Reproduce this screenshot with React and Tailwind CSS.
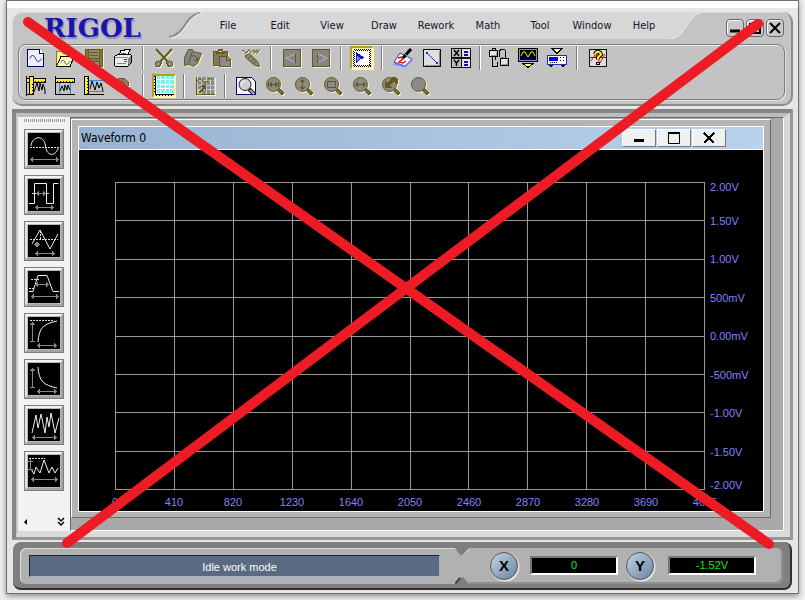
import { useState } from 'react'

const menuItems = ['File', 'Edit', 'View', 'Draw', 'Rework', 'Math', 'Tool', 'Window', 'Help']
const voltLabels = ['2.00V', '1.50V', '1.00V', '500mV', '0.00mV', '-500mV', '-1.00V', '-1.50V', '-2.00V']
const pointLabels = ['0', '410', '820', '1230', '1640', '2050', '2460', '2870', '3280', '3690', '4095']

const OLIVE = '#665a14'

function Icon({ children, disabled = false }) {
  return (
    <svg
      viewBox="0 0 20 20"
      fill="none"
      shapeRendering="crispEdges"
      className={`w-5 h-5 ${disabled ? 'drop-shadow-[1px_1px_0_#f4f0d8]' : ''}`}
    >
      {children}
    </svg>
  )
}

// Magnifier shared by all the zoom tools, the mark goes inside the lens
function Lens({ children }) {
  return (
    <Icon disabled>
      <path d="M13.500 13.500l5 5" stroke={OLIVE} strokeWidth="3" />
      <path d="M14.500 14.500l3 3" stroke="#8b8b8b" />
      <circle cx="8.500" cy="8.500" r="7" fill="#8a8a8a" stroke={OLIVE} shapeRendering="auto" />
      {children}
    </Icon>
  )
}

const icons = {
  newFile: (
    <Icon>
      <path d="M1.500 1.500h12l4 4v13h-16z" fill="#eef0ff" stroke="#000070" />
      <path d="M13.500 1.500v4h4" fill="#fff" stroke="#000070" />
      <path d="M4 10.500c1-4 4-4 5.500 0s4 4 6 0" stroke="#2020d0" shapeRendering="auto" />
    </Icon>
  ),
  open: (
    <Icon>
      <path d="M1.500 17V3.500h5l2 2h7V8" fill="#fbf08c" stroke="#8a7a10" />
      <path d="M1.500 18.500L6 8.500h13l-4 10z" fill="#fffbb0" stroke="#000" />
      <path d="M6 14.500c1-3 3-3 4 0s3 2 5-1" stroke="#2040e0" shapeRendering="auto" />
    </Icon>
  ),
  save: (
    <Icon disabled>
      <path d="M1.500 1.500h17v17h-15l-2-2z" fill="#807848" stroke={OLIVE} />
      <path d="M4.500 1.500h11v9h-11z" fill="#918b68" stroke={OLIVE} />
      <path d="M6 4.500h8M6 7.500h8" stroke={OLIVE} />
      <path d="M5.500 13.500h10v5h-10z" fill="#8b8b8b" stroke={OLIVE} />
      <path d="M7 14h3v4H7z" fill={OLIVE} />
    </Icon>
  ),
  print: (
    <Icon>
      <path d="M5.500 8L8 2.500h3l1-1h5L14.500 8" fill="#fff" stroke="#000" />
      <path d="M1.500 8.500l3-2h13l1 1v7l-4 4h-12l-1-1z" fill="#ececec" stroke="#000" />
      <path d="M15 10v8l3-4V8z" fill="#8a8a8a" />
      <path d="M2 9.500h13M4 15.500h9" stroke="#888" />
      <path d="M11 11.500h3" stroke="#e00000" />
      <path d="M11 13.500h3" stroke="#00a040" />
      <path d="M8 5.500h5" stroke="#555" />
    </Icon>
  ),
  cut: (
    <Icon disabled>
      <path d="M2 1l12 13M18 1L6 14" stroke={OLIVE} strokeWidth="2" shapeRendering="auto" />
      <path d="M1.500 14.500l3-2 3 2-2 4h-3l-1-1zM18.500 14.500l-3-2-3 2 2 4h3l1-1z" fill="#8b8b8b" stroke={OLIVE} />
    </Icon>
  ),
  copy: (
    <Icon disabled>
      <path d="M5.500 1.500h4l1 2 8 2-4 10-4 3-4-2-5 1v-8z" fill="#858585" stroke={OLIVE} shapeRendering="auto" />
      <path d="M9.500 3.500l-4 12" stroke={OLIVE} shapeRendering="auto" />
      <path d="M9 8c3-1 5 1 5 4M11 12.500h3.500V9" stroke={OLIVE} shapeRendering="auto" />
    </Icon>
  ),
  paste: (
    <Icon disabled>
      <path d="M1.500 3.500h14v14h-14z" fill="#807b60" stroke={OLIVE} />
      <path d="M6 1h5v2h2v3H4V3h2z" fill={OLIVE} />
      <path d="M7 3.500h3" stroke="#ddd" />
      <path d="M7.500 8.500h8l3 3v7h-11z" fill="#8b8b8b" stroke={OLIVE} />
      <path d="M14.500 8.500v4h4" stroke={OLIVE} />
    </Icon>
  ),
  brush: (
    <Icon disabled>
      <path d="M1 2.500h2l2 3 3-4 2 3 3-3v4l3-4v4l3-4" stroke={OLIVE} shapeRendering="auto" />
      <path d="M4.500 7.500l4-2 9 9 1 4-5-1-9-8z" fill="#858585" stroke={OLIVE} shapeRendering="auto" />
      <path d="M7 11l4-4M10 14l4-4M12 16l4-4" stroke={OLIVE} shapeRendering="auto" />
    </Icon>
  ),
  prev: (
    <Icon disabled>
      <rect x="1.500" y="1.500" width="17" height="17" rx="1" fill="#858585" stroke={OLIVE} />
      <path d="M13.500 5v10" stroke={OLIVE} />
      <path d="M13 6l-9 4 9 4.500" stroke="#f0f0f0" strokeDasharray="1 1" shapeRendering="auto" />
    </Icon>
  ),
  next: (
    <Icon disabled>
      <rect x="1.500" y="1.500" width="17" height="17" rx="1" fill="#858585" stroke={OLIVE} />
      <path d="M6.500 5v10" stroke={OLIVE} />
      <path d="M7 6l9 4-9 4.500" stroke="#f0f0f0" strokeDasharray="1 1" shapeRendering="auto" />
    </Icon>
  ),
  select: (
    <Icon>
      <path d="M1 1h18v18H1z" fill="#fff" />
      <path d="M1.500 1.500h17v17h-17z" stroke="#000" strokeDasharray="1 1" />
      <path d="M2.500 2.500h15v15h-15z" stroke="#000" strokeDasharray="1 1" />
      <path d="M4 4l9 6-5 1-4 4z" fill="#1414c8" />
      <path d="M5 8l3 2-3 3z" fill="#8090ff" />
    </Icon>
  ),
  pen: (
    <Icon>
      <path d="M1 14L7 5l12 6-7 7z" fill="#fff" stroke="#3030b0" shapeRendering="auto" />
      <path d="M1 15.500l11 3 7-7" stroke="#7080ff" strokeWidth="2" shapeRendering="auto" />
      <path d="M5 10l3-1 2 2-4 3 4 1 3-2" stroke="#e01010" shapeRendering="auto" strokeWidth="1.500" />
      <path d="M10 10l8-9" stroke="#000" strokeWidth="3" shapeRendering="auto" />
      <path d="M12 6l3 3" stroke="#aaa" />
    </Icon>
  ),
  line: (
    <Icon>
      <path d="M1.500 1.500h17v17h-17z" fill="#e0e0e0" stroke="#111" />
      <path d="M17.500 3v14.500H3" stroke="#888" />
      <path d="M5 5l10 10" stroke="#1030f0" />
      <path d="M4 4h2v2H4zM14 14h2v2h-2z" fill="#1030f0" />
    </Icon>
  ),
  xy: (
    <Icon>
      <path d="M0 0h20v20H0z" fill="#111" />
      <path d="M1 1h9v8H1zM1 11h9v8H1z" fill="#bbb" />
      <path d="M11 1h8v8h-8zM11 11h8v8h-8z" fill="#e4e4e4" />
      <path d="M3 2l5 6M8 2L3 8M3 12l2.500 3L8 12M5.500 15v3" stroke="#000" strokeWidth="1.500" shapeRendering="auto" />
      <path d="M13 3h4v2h-4zM13 6h4v2h-4zM13 13h4v2h-4zM13 16h4v2h-4z" fill="#1010b0" />
    </Icon>
  ),
  connect: (
    <Icon>
      <path d="M3.500 8v10.500h5v-5M6.500 8v4M10.500 9V2.500l2-1h3l1 1V11M13.500 11v-2" stroke="#000" />
      <path d="M3.500 2V.5h3V2" stroke="#000" />
      <path d="M0.500 2.500h8v6h-8zM11.500 10.500h8v7h-8z" fill="#e4e4e4" stroke="#000" />
      <path d="M2 7.500h5.500V4M13 16.500h5.500V12" stroke="#999" />
    </Icon>
  ),
  scopeDown: (
    <Icon>
      <path d="M0.500 0.500h19v13H0.500z" fill="#8888e8" stroke="#000" />
      <path d="M2 2h16v10H2z" fill="#000" />
      <path d="M3 8l2-4h2l3 5 3-5h2l2 4" stroke="#f8f020" shapeRendering="auto" />
      <path d="M5 15.500h10l-5 4z" fill="#ffff70" stroke="#000" />
    </Icon>
  ),
  scopeUp: (
    <Icon>
      <path d="M5 .5h10l-5 5z" fill="#ffff70" stroke="#000" />
      <path d="M0.500 7.500h19v9H0.500z" fill="#fff" stroke="#2030b0" />
      <path d="M2 9h9v4H2z" fill="#0000e0" />
      <path d="M13 9h1v1h-1zM16 9h1v1h-1zM13 12h1v1h-1zM16 12h1v1h-1z" fill="#000" />
      <path d="M3 14.500h8" stroke="#000" strokeDasharray="1 1" />
      <path d="M2 17.500h4M14 17.500h4M3 18.500h2M15 18.500h2" stroke="#000" />
    </Icon>
  ),
  help: (
    <Icon>
      <path d="M1.500 1.500h17v17h-17z" fill="#ddd" stroke="#111" />
      <path d="M2 9.500h16" stroke="#333" />
      <path d="M3 13l4-6 5 8 5-9" stroke="#f01010" shapeRendering="auto" />
      <path d="M7 6.500l1-2 2-1 2 1 1 2-3 3v2" stroke="#000" strokeWidth="4" shapeRendering="auto" />
      <path d="M7 6.500l1-2 2-1 2 1 1 2-3 3v2" stroke="#ffef20" strokeWidth="2" shapeRendering="auto" />
      <path d="M8.500 14.500h3v2h-3z" fill="#ffef20" stroke="#000" />
    </Icon>
  ),
  rulerBoth: (
    <Icon>
      <path d="M0.500 0v20M0 18.500h6" stroke="#000" />
      <path d="M0.500 2.500h19v4H0.500z" fill="#ffee30" stroke="#000" />
      <path d="M3.500 0.500h4v18h-4z" fill="#ffee30" stroke="#000" />
      <path d="M9 5.500h10M6.500 8v10" stroke="#000" strokeDasharray="1 2" />
      <path d="M8 16l3-9 2 8 1-8 2 7 1-6 2 6v4" stroke="#000" shapeRendering="auto" />
    </Icon>
  ),
  rulerTop: (
    <Icon>
      <path d="M0.500 0v18.500H20" stroke="#000" />
      <path d="M0.500 2.500h19v4H0.500z" fill="#ffee30" stroke="#000" />
      <path d="M2 5.500h17" stroke="#000" strokeDasharray="1 2" />
      <path d="M4.500 7v11M15.500 7v11" stroke="#2090f0" />
      <path d="M5 15l2-5 2 5 1-6 2 5 1-5 2 5" stroke="#000" shapeRendering="auto" />
    </Icon>
  ),
  rulerLeft: (
    <Icon>
      <path d="M0 18.500h20" stroke="#000" />
      <path d="M0.500 0.500h4v18h-4z" fill="#ffee30" stroke="#000" />
      <path d="M3.500 2v16" stroke="#000" strokeDasharray="1 2" />
      <path d="M5 4.500h15M5 15.500h15" stroke="#2090f0" />
      <path d="M6 13l2-8 3 9 2-8 2 6 2-5 2 8" stroke="#000" shapeRendering="auto" />
    </Icon>
  ),
  hand: (
    <Icon disabled>
      <path d="M4 4l3-2 5 1 3 3v4l-3 3-4 4-4-4z" fill="#858270" stroke={OLIVE} />
      <path d="M6 7l4 3M8 4l4 4" stroke={OLIVE} />
    </Icon>
  ),
  grid: (
    <Icon>
      <path d="M1 0h19v18H1z" fill="#fff" />
      <path d="M3 0h3v3H3zM7 0h4v3H7zM12 0h3v3h-3zM16 0h4v3h-4zM3 4h3v4H3zM7 4h4v4H7zM12 4h3v4h-3zM16 4h4v4h-4zM3 9h3v3H3zM7 9h4v3H7zM12 9h3v3h-3zM16 9h4v3h-4zM3 13h3v4H3zM7 13h4v4H7zM12 13h3v4h-3zM16 13h4v4h-4z" fill="#6cf6f6" />
      <path d="M1.500 0v18.500H20" stroke="#000" />
      <path d="M0.500 0v18M2 19.500h18" stroke="#000" strokeDasharray="1 2" />
    </Icon>
  ),
  gridCursor: (
    <Icon disabled>
      <path d="M2 1h18v17H2z" fill="#c8c8c8" />
      <path d="M3 1h3v3H3zM7 1h4v3H7zM12 1h3v3h-3zM16 1h3v3h-3zM3 5h3v4H3zM7 5h4v4H7zM12 5h3v4h-3zM16 5h3v4h-3zM3 10h3v3H3zM7 10h4v3H7zM12 10h3v3h-3zM16 10h3v3h-3zM12 14h3v4h-3zM16 14h3v4h-3zM7 14h4v4H7z" fill="#8b8b8b" />
      <path d="M1.500 1v17.500H20" stroke={OLIVE} />
      <path d="M2 5l3-2 3 2 3 2 4-5 3 3" stroke={OLIVE} shapeRendering="auto" />
      <path d="M3 16l5-5H4l7-3v7l-2-2-4 4z" fill={OLIVE} />
    </Icon>
  ),
  preview: (
    <Icon>
      <path d="M0.500 1.500h15l4 4v13h-19z" fill="#fff" stroke="#000078" />
      <path d="M13 13l5 5" stroke="#222" strokeWidth="4" shapeRendering="auto" />
      <path d="M14 14l4 4" stroke="#aaa" strokeWidth="2" shapeRendering="auto" />
      <circle cx="9" cy="8.500" r="6" fill="#cfcfcf" stroke="#222" shapeRendering="auto" />
      <path d="M5.500 9c0-3 1-4 4-4" stroke="#fff" shapeRendering="auto" />
    </Icon>
  ),
  zoomIn: (
    <Lens>
      <path d="M4 8.500h9M3.500 6v5M13.500 6v5" stroke={OLIVE} />
      <path d="M4 8.500L7 6v5zM13 8.500L10 6v5z" fill={OLIVE} />
    </Lens>
  ),
  zoomY: (
    <Lens>
      <path d="M8.500 4v9" stroke={OLIVE} />
      <path d="M8.500 3L11 6H6zM8.500 14l2.500-3H6z" fill={OLIVE} />
    </Lens>
  ),
  zoomRect: <Lens><path d="M4.500 5.500h8v6h-8z" stroke={OLIVE} /></Lens>,
  zoomX: (
    <Lens>
      <path d="M4 8.500h9" stroke={OLIVE} />
      <path d="M3 8.500L6 6v5zM14 8.500L11 6v5z" fill={OLIVE} />
    </Lens>
  ),
  zoomBack: (
    <Lens>
      <path d="M4 5v7h7L9 10l4-5 2 3h2V3l-3-2h-3L7 7z" fill={OLIVE} />
    </Lens>
  ),
  zoom: <Lens />,
}

const topTools = [
  ['New', 'newFile'], ['Open', 'open'], ['Save', 'save'], ['Print', 'print'], '|',
  ['Cut', 'cut'], ['Copy', 'copy'], ['Paste', 'paste'], ['Smooth', 'brush'], '|',
  ['Previous', 'prev'], ['Next', 'next'], '|',
  ['Select', 'select'], '|',
  ['Freehand', 'pen'], ['Line', 'line'], ['Expression', 'xy'], '.',
  ['Connect', 'connect'], ['Read', 'scopeDown'], ['Send', 'scopeUp'], '|',
  ['Help', 'help'],
]

const bottomTools = [
  ['Cursors', 'rulerBoth'], ['X cursor', 'rulerTop'], ['Y cursor', 'rulerLeft'], ['Pan', 'hand'], '|',
  ['Grid', 'grid'], '|',
  ['Snap', 'gridCursor'], '|',
  ['Preview', 'preview'], ['Zoom X', 'zoomIn'], ['Zoom Y', 'zoomY'], ['Zoom area', 'zoomRect'],
  ['Fit X', 'zoomX'], ['Undo zoom', 'zoomBack'], ['Zoom all', 'zoom'],
]

function ToolRow({ tools, active, onPick }) {
  return (
    <div className="flex h-[26px] items-center">
      {tools.map((tool, i) => {
        if (typeof tool === 'string') {
          return (
            <div key={i} className={`flex h-6 justify-center ${tool === '|' ? 'w-3' : 'w-[9px]'}`}>
              <div className="w-0.5 border-l border-r border-l-[#7d7d7d] border-r-white" />
            </div>
          )
        }
        const [label, icon] = tool
        return (
          <div key={label} className="flex w-[29px] justify-center">
            <button
              aria-label={label}
              onClick={() => onPick(label)}
              className={`flex h-6 w-6 items-center justify-center ${
                active === label ? 'border-2 border-t-[#b89c28] border-l-[#b89c28] border-r-[#fff6b0] border-b-[#fff6b0] bg-[#ffec90]' : ''
              }`}
            >
              <span className="flex h-5 w-5 shrink-0">{icons[icon]}</span>
            </button>
          </div>
        )
      })}
    </div>
  )
}

const arrowX = (x1, x2, y) => `M${x1} ${y}.5h${x2 - x1}M${x1 + 2}.5 ${y - 2}v5M${x1 + 1}.5 ${y - 1}v3M${x2 - 3}.5 ${y - 2}v5M${x2 - 2}.5 ${y - 1}v3`

const measures = [
  { label: 'Sine', wave: 'M3 13c1-10 13-12 14.500 0s11 10 13 1', dots: 'M2 14.500h29', arrow: arrowX(2, 31, 26) },
  { label: 'Square', wave: 'M1 24.500h5.500v-20h12v20h7v-20h5', dots: 'M4 14.500h18', arrow: arrowX(7, 26, 28) + arrowX(8, 18, 14) },
  { label: 'Triangle', wave: 'M4 19l8-14 10 19 8-15', dots: 'M2 14.500h28M12.500 6v9', arrow: arrowX(7, 27, 28) + arrowX(6, 12, 19) },
  { label: 'Trapezoid', wave: 'M1 20.500h4l5-16h9l6 16h6', dots: 'M3 8.500h8M1 17.500h6', arrow: arrowX(3, 31, 25) + arrowX(7, 21, 13) },
  { label: 'Rise', wave: 'M10 25c1-14 5-18 19-21', dots: 'M2 3.500h24', arrow: arrowX(9, 29, 28) + 'M4.500 5v20M2 24.500h5M2 7.500h5M3 6.500h3' },
  { label: 'Fall', wave: 'M10 4c1 14 5 18 19 21', dots: '', arrow: arrowX(9, 29, 28) + 'M4.500 5v20M2 24.500h5M2 7.500h5M3 6.500h3' },
  { label: 'Noise', wave: 'M4 24l4-18 2 13 3-14 4 19 2-16 2 10 2-14 4 20 4-15', dots: '', arrow: arrowX(4, 29, 28) },
  { label: 'Sinc', wave: 'M3 14l3 5 2-7 4 6 4-13 5 13 3-6 3 6 3-5', dots: 'M1 3.500h16', arrow: arrowX(3, 30, 24) + 'M2.500 4v11M0 6.500h5M0 14.500h5' },
]

function MeasureButton({ wave, dots, arrow, label }) {
  return (
    <button aria-label={label} className="h-10 w-10 shrink-0 border border-[#7c7c7c] bg-[#b9b9b9]">
      <span className="flex h-full w-full items-center justify-center border-2 border-t-[#f2f2f2] border-l-[#e4e4e4] border-r-[#a4a4a4] border-b-[#a4a4a4]">
        <svg viewBox="0 0 32 32" fill="none" className="h-8 w-8 bg-black">
          <path d={wave} stroke="#eee" />
          <path d={dots} stroke="#ddd" strokeDasharray="2 1" shapeRendering="crispEdges" />
          <path d={arrow} stroke="#888" shapeRendering="crispEdges" />
        </svg>
      </span>
    </button>
  )
}

function FrameButton({ label, children }) {
  return (
    <button
      aria-label={label}
      className="flex h-[18px] w-[18px] items-center justify-center rounded-sm border border-[#666] bg-[#c8c8c8] shadow-[inset_1px_1px_0_#fff]"
    >
      <svg viewBox="0 0 14 14" fill="none" stroke="#000" strokeWidth="2" className="h-3.5 w-3.5">
        {children}
      </svg>
    </button>
  )
}

function ChildButton({ label, children }) {
  return (
    <button
      aria-label={label}
      className="flex h-[18px] w-[34px] items-center justify-center border border-t-white border-l-white border-r-[#777] border-b-[#777] bg-[#f0f0f0]"
    >
      <svg viewBox="0 0 12 12" fill="none" stroke="#000" className="h-3 w-3" shapeRendering="crispEdges">
        {children}
      </svg>
    </button>
  )
}

function Header() {
  const [active, setActive] = useState('Select')
  const [view, setView] = useState('Grid')

  return (
    <header className="mx-[5px] mt-1 rounded-[10px] border-r-2 border-b-2 border-[#8a8a8a] bg-[#c4c4c4] px-1.5 pb-1 shadow-[inset_1px_1px_0_#d8d8d8]">
      <div className="flex h-8 items-start">
        <div className="w-[148px] shrink-0 pl-[26px] pt-1 font-['DejaVu_Serif',serif] text-[26px] leading-6 font-bold text-[#1c14aa] [text-shadow:1px_2px_1px_#8c8cc0]">
          RIGOL
        </div>
        <svg viewBox="0 0 36 27" fill="none" className="h-[27px] w-9 shrink-0">
          <path d="M0 26C18 24 18 2 36 0V27H0z" fill="#d7d7d7" />
          <path d="M3 25C19 23 19 3 34 1" stroke="#8a8a8a" strokeWidth="2" />
          <path d="M5 26C21 24 20 4 36 1" stroke="#f0f0f0" />
        </svg>
        <nav className="flex h-[27px] flex-1 items-center bg-[#d7d7d7]">
          {menuItems.map((item) => (
            <button key={item} className="w-[52px] shrink-0 text-center text-[11px] leading-4 text-[#20142c]">
              {item}
            </button>
          ))}
        </nav>
        <svg viewBox="0 0 32 27" fill="none" className="h-[27px] w-8 shrink-0">
          <path d="M0 0H32C17 3 16 26 0 27z" fill="#d7d7d7" />
          <path d="M0 27C16 26 17 3 32 0" stroke="#eee" />
        </svg>
        <div className="flex shrink-0 gap-0.5 pt-[7px] pr-px pl-6">
          <FrameButton label="Minimize"><path d="M2 10h10" strokeWidth="3" /></FrameButton>
          <FrameButton label="Maximize"><path d="M2 3h10v9H2z" /></FrameButton>
          <FrameButton label="Close"><path d="M2 2l10 10M12 2L2 12" /></FrameButton>
        </div>
      </div>
      <div className="flex flex-col gap-0.5 rounded-lg border border-[#7c7c7c] bg-[#c3c3c3] px-0.5 shadow-[inset_1px_1px_0_#ececec,1px_1px_0_#e4e4e4]">
        <ToolRow tools={topTools} active={active} onPick={setActive} />
        <ToolRow tools={bottomTools} active={view} onPick={setView} />
      </div>
    </header>
  )
}

function Plot() {
  return (
    <div className="flex flex-1 bg-black pt-8 pl-9 text-[11px] text-[#8080ff]">
      <div className="flex flex-1 flex-col">
        <div className="grid flex-1 grid-cols-10 grid-rows-8 border-t border-l border-[#9a9a9a]">
          {Array.from({ length: 80 }, (_, i) => (
            <div key={i} className="border-r border-b border-[#9a9a9a]" />
          ))}
        </div>
        <div className="flex h-[21px] items-center justify-between pt-1">
          {pointLabels.map((label) => (
            <div key={label} className="flex w-0 justify-center">{label}</div>
          ))}
        </div>
      </div>
      <div className="flex w-[58px] flex-col justify-between pb-[21px] pl-[5px] leading-[10px]">
        {voltLabels.map((label, i) => (
          <div
            key={label}
            className={`flex h-0 ${i === 0 ? 'items-start' : i === voltLabels.length - 1 ? 'items-end' : 'items-center'}`}
          >
            {label}
          </div>
        ))}
      </div>
    </div>
  )
}

function WaveformWindow() {
  return (
    <section className="mr-3 mb-3 flex flex-1 flex-col border border-t-white border-l-white border-r-[#6c6c6c] border-b-[#6c6c6c] bg-[#b4b4b4] px-1.5 pt-1.5 pb-[5px]">
      <div className="flex flex-1 flex-col border border-white">
        <div className="flex h-[23px] items-center border-b border-white bg-linear-to-r from-[#99b4d1] to-[#b9d1ea] pr-[37px] pl-0.5">
          <h1 className="flex-1 font-['DejaVu_Sans_Condensed',Tahoma,sans-serif] text-[12px] text-black">Waveform 0</h1>
          <div className="flex gap-px">
            <ChildButton label="Minimize window"><path d="M1 8h10" strokeWidth="3" /></ChildButton>
            <ChildButton label="Restore window"><path d="M0.500 0.500h11v11H0.500zM1 1.500h10" /></ChildButton>
            <ChildButton label="Close window"><path d="M1 1l10 10M11 1L1 11" strokeWidth="2" /></ChildButton>
          </div>
        </div>
        <Plot />
      </div>
    </section>
  )
}

function Workspace() {
  return (
    <main className="mx-[5px] mt-[3px] flex flex-1 border-t-4 border-r-[3px] border-b-[3px] border-l-4 border-t-[#858585] border-r-[#999] border-b-[#969696] border-l-[#858585]">
      <div className="flex flex-1 border-t-4 border-r-[6px] border-b-[6px] border-l-2 border-t-[#bcbcbc] border-r-[#d8d8d8] border-b-[#dadada] border-l-[#c4c4c4]">
        <aside className="flex w-[52px] shrink-0 flex-col items-center bg-[#f2f2f2] pt-0.5">
          <div className="h-[3px] w-[41px] bg-[repeating-linear-gradient(90deg,#999_0_1px,#f2f2f2_1px_2px)]" />
          <div className="flex flex-col gap-1.5 pt-[7px]">
            {measures.map((m) => (
              <MeasureButton key={m.label} {...m} />
            ))}
          </div>
          <div className="mt-auto flex w-full items-center justify-between px-1 pb-1">
            <button aria-label="Scroll left">
              <svg viewBox="0 0 8 10" className="h-2.5 w-2"><path d="M5 2v6L2 5z" /></svg>
            </button>
            <button aria-label="More tools">
              <svg viewBox="0 0 10 10" fill="none" stroke="#000" strokeWidth="1.500" className="h-2.5 w-2.5">
                <path d="M2 1l3 3 3-3M2 5l3 3 3-3" />
              </svg>
            </button>
          </div>
        </aside>
        <div className="flex flex-1 border border-t-[#686868] border-l-[#686868] border-r-white border-b-white bg-[#a9a9a9] pt-px">
          <WaveformWindow />
        </div>
      </div>
    </main>
  )
}

function Knob({ children }) {
  return (
    <button className="h-7 w-7 rounded-full border border-[#555] bg-linear-to-br from-[#c4d4e6] to-[#6d83a0] text-center text-[15px] leading-6 font-bold text-black shadow-[1px_1px_2px_#fff]">
      {children}
    </button>
  )
}

function Readout({ children }) {
  return (
    <output className="h-[19px] w-[88px] border-2 border-t-[#777] border-l-[#777] border-r-white border-b-white bg-black text-center text-[11px] leading-[14px] text-[#10e818]">
      {children}
    </output>
  )
}

function StatusBar() {
  return (
    <footer className="mx-1.5 mt-0.5 mb-[3px] flex h-12 rounded-lg border-r-2 border-b-2 border-[#303030] bg-[#7f7f7f] px-[7px] pt-1.5 pb-1">
      <div className="flex flex-1 items-center rounded-l-md bg-[#b1b1b1] pr-[15px] pl-[9px] shadow-[inset_1px_1px_0_#dcdcdc]">
        <div className="h-[22px] flex-1 border border-t-[#1c2430] border-l-[#1c2430] border-r-[#a0b0c8] border-b-[#a0b0c8] bg-[#5a6a82] pl-2.5 text-center text-[11px] leading-[22px] text-white">
          Idle work mode
        </div>
      </div>
      <svg viewBox="0 0 14 36" preserveAspectRatio="none" className="h-full w-3.5">
        <path d="M0 0h14v36H0z" fill="#b1b1b1" />
        <path d="M0 0h14L8 7H5zM0 36h14L8 29l-3 1z" fill="#7f7f7f" />
        <path d="M8 7l6-6" stroke="#e0e0e0" fill="none" />
        <path d="M0 36l5-6" stroke="#444" strokeWidth="2" fill="none" />
      </svg>
      <div className="flex shrink-0 items-center rounded-r-md bg-[#b1b1b1] pr-[27px] pl-[21px] shadow-[inset_-2px_-2px_0_#8f8f8f]">
        <Knob>X</Knob>
        <div className="flex pl-3 pr-2 pb-0.5"><Readout>0</Readout></div>
        <Knob>Y</Knob>
        <div className="flex pl-3.5 pb-0.5"><Readout>-1.52V</Readout></div>
      </div>
    </footer>
  )
}

export default function App() {
  return (
    <div className="relative flex min-h-screen flex-col bg-[#f0f0f0] px-1.5 pb-1.5 font-['Liberation_Sans',Arial,sans-serif]">
      <div className="flex flex-1 flex-col border border-[#707070] bg-[#e6e6e6] font-['DejaVu_Sans_Condensed',Tahoma,sans-serif] shadow-[0_2px_6px_#888]">
        <div className="h-[7px] bg-white" />
        <Header />
        <div className="flex flex-1 flex-col font-['Liberation_Sans',Arial,sans-serif]">
          <Workspace />
          <StatusBar />
        </div>
      </div>
      <svg
        viewBox="0 0 805 600"
        preserveAspectRatio="none"
        className="pointer-events-none absolute inset-0 h-full w-full"
      >
        <path d="M28 22L769 544M758 24L67 543" stroke="#ed1c24" strokeWidth="10" strokeLinecap="round" />
      </svg>
    </div>
  )
}
